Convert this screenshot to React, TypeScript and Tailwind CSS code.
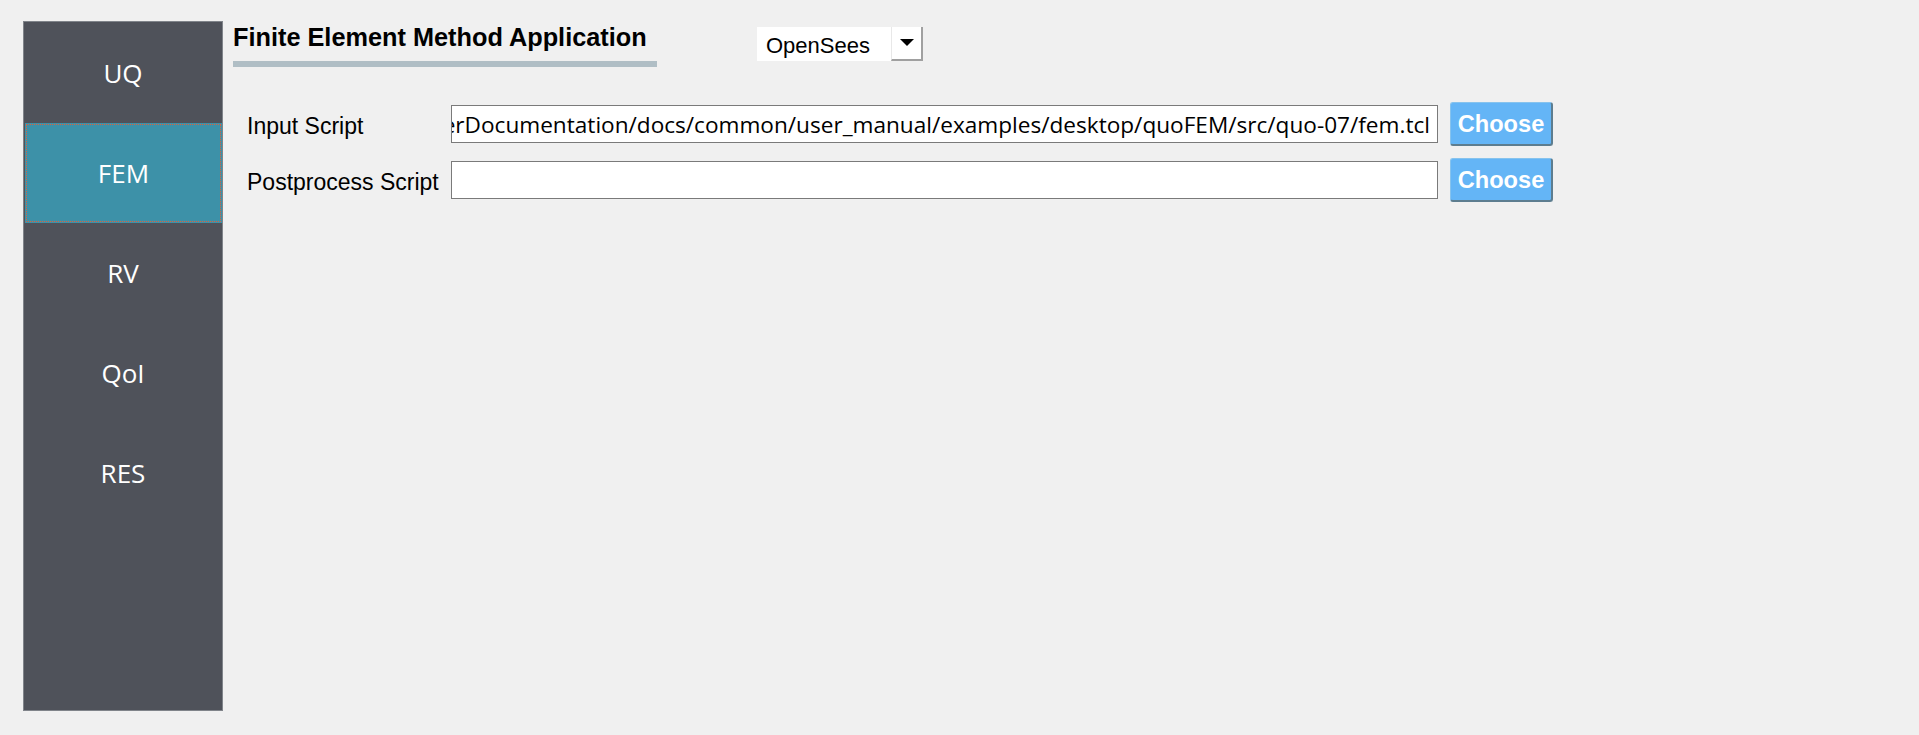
import React from "react";

const items = ["UQ", "FEM", "RV", "QoI", "RES"];

function Row({ label, value }: { label: string; value: string }) {
  return (
    <div className="flex items-center h-[44px]">
      <div className="w-[204px] shrink-0 pt-[4px] text-[23px] text-black leading-none" style={{ fontFamily: '"Liberation Sans", Arial, sans-serif' }}>
        {label}
      </div>
      <div className="w-[987px] h-[38px] border border-[#7a7a7a] bg-white flex items-center justify-end overflow-hidden pr-[7px] pt-[3px]">
        <span className="whitespace-nowrap text-[22.6px] text-black leading-none" style={{ fontFamily: '"Open Sans", sans-serif' }}>
          {value}
        </span>
      </div>
      <button className="ml-[12px] w-[103px] h-[44px] rounded-[3px] bg-[#64b5f6] border border-t-[#86c3ee] border-l-[#86c3ee] border-r-[#5d7d8f] border-b-[#5d7d8f] border-r-2 border-b-2 text-white font-bold text-[23.6px] leading-none flex items-center justify-center pt-[3px]" style={{ fontFamily: '"Liberation Sans", Arial, sans-serif' }}>
        Choose
      </button>
    </div>
  );
}

export default function App() {
  return (
    <div className="w-[1919px] h-[735px] bg-[#f0f0f0] flex pt-[21px] pl-[23px] overflow-hidden">
      <div className="w-[200px] h-[690px] border border-[#80848a] bg-[#4f525a] flex flex-col pt-[1px]">
        {items.map((it) => (
          <div
            key={it}
            className={
              it === "FEM"
                ? "h-[100px] ml-[1px] flex items-center justify-center bg-[#3d91a8] outline-1 outline-dotted outline-[#e0603a] -outline-offset-2 text-white text-[26px]"
                : "h-[100px] flex items-center justify-center text-white text-[26px]"
            }
            style={{ fontFamily: '"Open Sans", sans-serif' }}
          >
            {it}
          </div>
        ))}
      </div>
      <div className="ml-[10px] flex flex-col pt-[1px]">
        <div className="flex items-start">
          <div className="w-[424px] flex flex-col">
            <div className="text-[25.3px] leading-[30px] font-bold text-black" style={{ fontFamily: '"Liberation Sans", Arial, sans-serif' }}>
              Finite Element Method Application
            </div>
            <div className="mt-[9px] h-[6px] bg-[#b0bec5]" />
          </div>
          <div className="ml-[100px] mt-[5px] w-[166px] h-[34px] bg-white flex items-stretch">
            <div className="flex-1 flex items-center pl-[9px] pt-[4px] text-[22px] text-black leading-none" style={{ fontFamily: '"Liberation Sans", Arial, sans-serif' }}>
              OpenSees
            </div>
            <div className="w-[32px] border-l border-l-[#e8e8e8] border-r-2 border-b-2 border-r-[#a0a0a0] border-b-[#a0a0a0] flex items-center justify-center">
              <svg width="14" height="8" viewBox="0 0 14 8">
                <polygon points="0,0 14,0 7,7" fill="#000" />
              </svg>
            </div>
          </div>
        </div>
        <div className="mt-[35px] pl-[14px] flex flex-col gap-[12px]">
          <Row label="Input Script" value="erDocumentation/docs/common/user_manual/examples/desktop/quoFEM/src/quo-07/fem.tcl" />
          <Row label="Postprocess Script" value="" />
        </div>
      </div>
    </div>
  );
}
